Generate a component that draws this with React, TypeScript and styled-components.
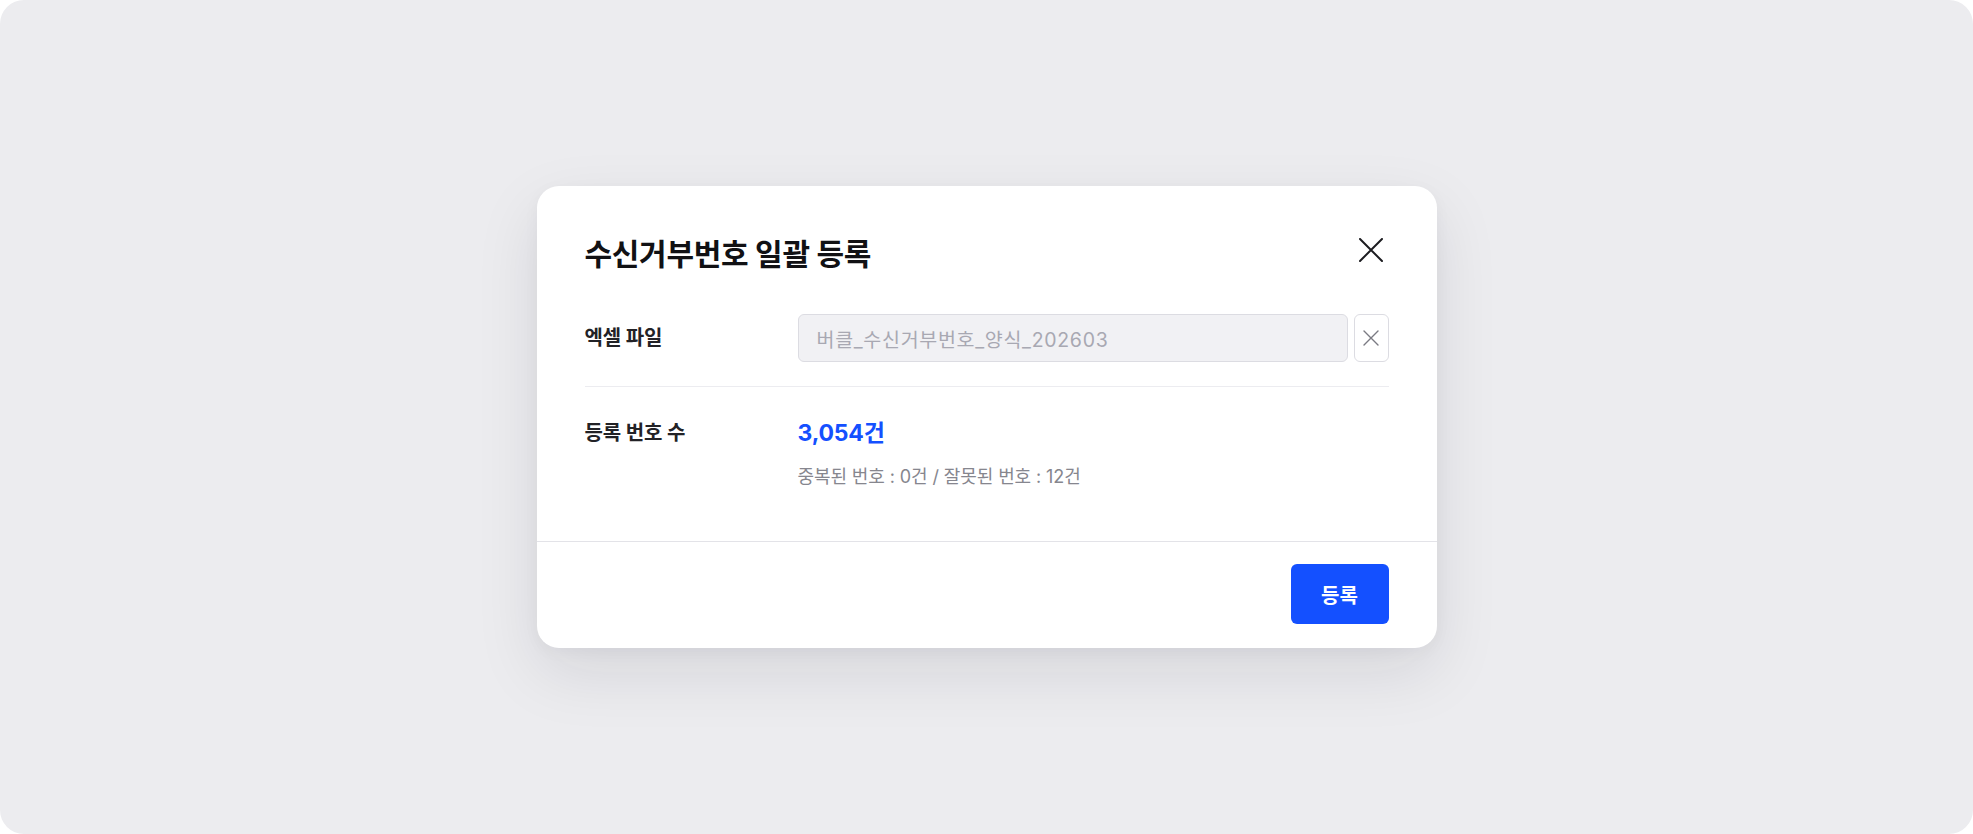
import React from "react";
import styled, { createGlobalStyle } from "styled-components";

const GlobalStyle = createGlobalStyle`
  html, body { margin: 0; padding: 0; background: #ffffff; }
  body {
    font-family: Inter, "Noto Sans CJK KR", "Noto Sans", sans-serif;
    -webkit-font-smoothing: antialiased;
  }
  * { box-sizing: border-box; }
`;

const Stage = styled.div`
  width: 1973px;
  height: 834px;
  background: #ececef;
  border-radius: 24px;
  display: flex;
  align-items: center;
  justify-content: center;
`;

const Modal = styled.div`
  width: 900px;
  background: #ffffff;
  border-radius: 22px;
  box-shadow: 0 24px 64px rgba(20, 20, 40, 0.10), 0 4px 16px rgba(20, 20, 40, 0.04);
  display: flex;
  flex-direction: column;
  overflow: hidden;
`;

const Body = styled.div`
  padding: 48px 48px 52px;
  display: flex;
  flex-direction: column;
`;

const Header = styled.div`
  height: 40px;
  display: flex;
  align-items: center;
  justify-content: space-between;
  margin-bottom: 40px;
`;

const Title = styled.h2`
  margin: 0;
  font-size: 30px;
  line-height: 40px;
  font-weight: 700;
  color: #111114;
  letter-spacing: -0.3px;
`;

const CloseButton = styled.button`
  width: 24px;
  height: 24px;
  padding: 0;
  margin: -8px 6px 0 0;
  border: none;
  background: transparent;
  display: flex;
  align-items: center;
  justify-content: center;
  cursor: pointer;
  color: #1c1c20;
`;

const Row = styled.div<{ $divided?: boolean; $top?: number; $bottom?: number }>`
  display: grid;
  grid-template-columns: 213px 1fr;
  align-items: ${(p) => (p.$divided ? "center" : "start")};
  padding-top: ${(p) => p.$top ?? 0}px;
  padding-bottom: ${(p) => p.$bottom ?? 0}px;
  border-bottom: ${(p) => (p.$divided ? "1px solid #ececf0" : "none")};
`;

const Label = styled.div`
  font-size: 20px;
  line-height: 28px;
  font-weight: 600;
  color: #222226;
  letter-spacing: -0.2px;
`;

const FileField = styled.div`
  display: flex;
  gap: 6px;
  align-items: stretch;
  height: 48px;
`;

const FileInput = styled.div`
  flex: 1;
  display: flex;
  align-items: center;
  padding: 0 18px;
  background: #f1f1f4;
  border: 1px solid #dcdce2;
  border-radius: 6px;
  font-size: 19.5px;
  color: #a8a8b2;
  letter-spacing: 0.7px;
`;

const ClearButton = styled.button`
  width: 35px;
  padding: 0;
  background: #ffffff;
  border: 1px solid #dcdce2;
  border-radius: 6px;
  display: flex;
  align-items: center;
  justify-content: center;
  color: #7a7a82;
  cursor: pointer;
`;

const ValueBlock = styled.div`
  display: flex;
  flex-direction: column;
  gap: 18px;
`;

const Count = styled.div`
  font-size: 23px;
  line-height: 28px;
  font-weight: 700;
  color: #1450ff;
  letter-spacing: -0.2px;
`;

const Note = styled.div`
  font-size: 18px;
  line-height: 24px;
  color: #86868e;
  letter-spacing: -0.1px;
`;

const Footer = styled.div`
  border-top: 1px solid #e3e3e8;
  padding: 22px 48px 24px;
  display: flex;
  justify-content: flex-end;
`;

const PrimaryButton = styled.button`
  width: 98px;
  height: 60px;
  border: none;
  border-radius: 6px;
  background: #1450ff;
  color: #ffffff;
  font-family: inherit;
  font-size: 20px;
  font-weight: 700;
  cursor: pointer;
`;

const XIcon = ({ size, stroke }: { size: number; stroke: number }) => (
  <svg width={size} height={size} viewBox={`0 0 ${size} ${size}`} fill="none">
    <path
      d={`M1 1L${size - 1} ${size - 1}M${size - 1} 1L1 ${size - 1}`}
      stroke="currentColor"
      strokeWidth={stroke}
      strokeLinecap="round"
    />
  </svg>
);

export default function App() {
  return (
    <>
      <GlobalStyle />
      <Stage>
        <Modal>
          <Body>
            <Header>
              <Title>수신거부번호 일괄 등록</Title>
              <CloseButton aria-label="닫기">
                <XIcon size={24} stroke={2} />
              </CloseButton>
            </Header>
            <Row $divided $bottom={24}>
              <Label>엑셀 파일</Label>
              <FileField>
                <FileInput>버클_수신거부번호_양식_202603</FileInput>
                <ClearButton aria-label="파일 삭제">
                  <XIcon size={16} stroke={1.4} />
                </ClearButton>
              </FileField>
            </Row>
            <Row $top={32}>
              <Label>등록 번호 수</Label>
              <ValueBlock>
                <Count>3,054건</Count>
                <Note>중복된 번호 : 0건 / 잘못된 번호 : 12건</Note>
              </ValueBlock>
            </Row>
          </Body>
          <Footer>
            <PrimaryButton>등록</PrimaryButton>
          </Footer>
        </Modal>
      </Stage>
    </>
  );
}
